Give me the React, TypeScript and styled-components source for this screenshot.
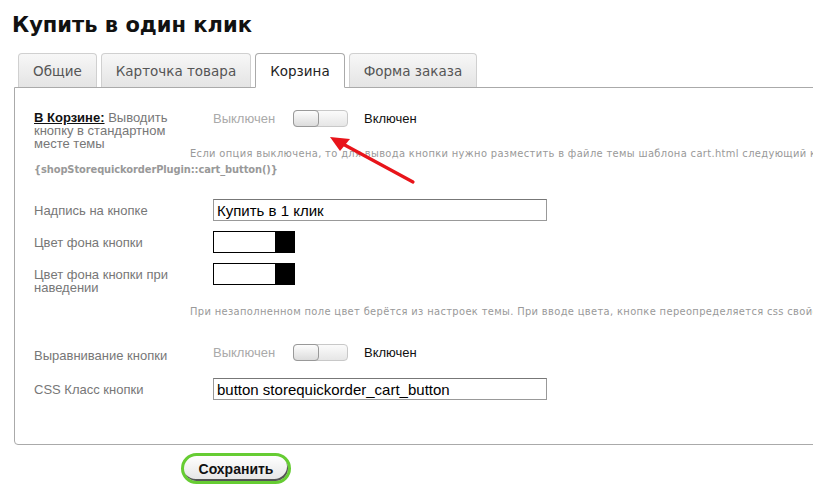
import styled, { createGlobalStyle } from "styled-components";

const Global = createGlobalStyle`
  html, body {
    margin: 0;
    padding: 0;
    background: #fff;
  }
  body {
    font-family: "Liberation Sans", Arial, sans-serif;
    overflow: hidden;
  }
`;

function Toggle() {
  return (
    <Switch>
      <Knob />
    </Switch>
  );
}

function App() {
  return (
    <Page>
      <Global />
      <Title>Купить в один клик</Title>
      <Tabs>
        <Tab>Общие</Tab>
        <Tab>Карточка товара</Tab>
        <Tab $active>Корзина</Tab>
        <Tab>Форма заказа</Tab>
      </Tabs>
      <Panel>
        <Field $top={22}>
          <Label $width={140} $flush>
            <Strong>В Корзине:</Strong> Выводить кнопку в стандартном месте темы
          </Label>
          <SwitchGroup>
            <Off>Выключен</Off>
            <Toggle />
            <On>Включен</On>
          </SwitchGroup>
        </Field>
        <Hint $top={-3}>
          Если опция выключена, то для вывода кнопки нужно разместить в файле темы шаблона cart.html следующий код
        </Hint>
        <Code>{"{shopStorequickorderPlugin::cart_button()}"}</Code>

        <Field $top={23}>
          <Label>Надпись на кнопке</Label>
          <Input defaultValue="Купить в 1 клик" />
        </Field>
        <Field $top={10}>
          <Label>Цвет фона кнопки</Label>
          <Swatch>
            <SwatchFill />
          </Swatch>
        </Field>
        <Field $top={10}>
          <Label $width={150}>Цвет фона кнопки при наведении</Label>
          <Swatch>
            <SwatchFill />
          </Swatch>
        </Field>
        <Hint $top={11}>
          При незаполненном поле цвет берётся из настроек темы. При вводе цвета, кнопке переопределяется css свойство
        </Hint>

        <Field $top={26}>
          <Label>Выравнивание кнопки</Label>
          <SwitchGroup>
            <Off>Выключен</Off>
            <Toggle />
            <On>Включен</On>
          </SwitchGroup>
        </Field>
        <Field $top={16}>
          <Label>CSS Класс кнопки</Label>
          <Input defaultValue="button storequickorder_cart_button" />
        </Field>

        <Arrow width="90" height="50" viewBox="0 0 90 50">
          <line x1="84" y1="46" x2="12" y2="7" stroke="#e8141a" strokeWidth="3.2" strokeLinecap="round" />
          <polygon points="1,1 21,3 11,15" fill="#e8141a" />
        </Arrow>
      </Panel>
      <Actions>
        <SaveButton>Сохранить</SaveButton>
      </Actions>
    </Page>
  );
}

const Page = styled.div`
  width: 813px;
  height: 502px;
  overflow: hidden;
  padding-top: 12px;
  box-sizing: border-box;
`;

const Title = styled.h1`
  margin: 0 0 0 12px;
  font-family: "DejaVu Sans", Verdana, sans-serif;
  font-size: 21px;
  font-weight: 700;
  color: #111;
  line-height: 26px;
`;

const Tabs = styled.div`
  display: flex;
  gap: 4px;
  margin: 15px 0 0 18px;
  position: relative;
  z-index: 1;
`;

const Tab = styled.div<{ $active?: boolean }>`
  box-sizing: border-box;
  padding: 0 14px;
  display: flex;
  align-items: center;
  font-family: "DejaVu Sans", Verdana, sans-serif;
  font-size: 13.5px;
  color: ${(p) => (p.$active ? "#222" : "#555")};
  border: 1px solid ${(p) => (p.$active ? "#aaa" : "#d0d0d0")};
  border-bottom: ${(p) => (p.$active ? "1px solid #fff" : "none")};
  border-radius: 4px 4px 0 0;
  background: ${(p) =>
    p.$active ? "#fff" : "linear-gradient(#f7f7f7, #e4e4e4)"};
  margin-bottom: ${(p) => (p.$active ? "-1px" : "0")};
  height: ${(p) => (p.$active ? "35px" : "34px")};
`;

const Panel = styled.div`
  position: relative;
  margin-left: 14px;
  width: 820px;
  height: 358px;
  box-sizing: border-box;
  border: 1px solid #aaa;
  border-radius: 0 0 0 4px;
  padding-left: 19px;
`;

const Field = styled.div<{ $top?: number }>`
  display: flex;
  align-items: flex-start;
  margin-top: ${(p) => p.$top ?? 0}px;
`;

const Label = styled.div<{ $width?: number; $flush?: boolean }>`
  flex-shrink: 0;
  font-size: 13px;
  line-height: 13px;
  color: #777;
  padding-top: ${(p) => (p.$flush ? "1px" : "5px")};
  width: ${(p) => (p.$width ? `${p.$width}px` : "179px")};
  margin-right: ${(p) => (p.$width ? `${179 - p.$width}px` : "0")};
`;

const Strong = styled.span`
  font-weight: 700;
  color: #111;
  text-decoration: underline;
`;

const SwitchGroup = styled.div`
  display: flex;
  align-items: center;
  height: 17px;
  font-size: 13px;
`;

const Off = styled.span`
  color: #aaa;
  width: 80px;
`;

const On = styled.span`
  color: #111;
  margin-left: 16px;
`;

const Switch = styled.div`
  width: 55px;
  height: 17px;
  box-sizing: border-box;
  border: 1px solid #c8c8c8;
  border-radius: 4px;
  background: linear-gradient(#fbfbfb, #e6e6e6);
  position: relative;
`;

const Knob = styled.div`
  position: absolute;
  left: -1px;
  top: -1px;
  width: 26px;
  height: 17px;
  box-sizing: border-box;
  border: 1px solid #999;
  border-radius: 4px;
  background: linear-gradient(#fdfdfd, #dcdcdc);
`;

const Hint = styled.div<{ $top?: number }>`
  margin: ${(p) => p.$top ?? 19}px 0 0 156px;
  font-family: "DejaVu Sans Condensed", "DejaVu Sans", sans-serif;
  font-size: 11px;
  letter-spacing: 0.35px;
  line-height: 13px;
  color: #999;
  white-space: nowrap;
`;

const Code = styled.div`
  margin-top: 3px;
  font-family: "DejaVu Sans Condensed", "DejaVu Sans", sans-serif;
  font-size: 11px;
  letter-spacing: -0.1px;
  font-weight: 700;
  line-height: 13px;
  color: #999;
  white-space: nowrap;
`;

const Input = styled.input`
  width: 334px;
  height: 22px;
  box-sizing: border-box;
  border: 1px solid #999;
  border-top-color: #777;
  padding: 0 3px;
  font-family: "Liberation Sans", Arial, sans-serif;
  font-size: 15px;
  color: #000;
  outline: none;
`;

const Swatch = styled.div`
  width: 82px;
  height: 22px;
  box-sizing: border-box;
  border: 1px solid #000;
  background: #fff;
  display: flex;
  justify-content: flex-end;
`;

const SwatchFill = styled.div`
  width: 19px;
  height: 100%;
  background: #000;
`;

const Arrow = styled.svg`
  position: absolute;
  left: 314px;
  top: 48px;
`;

const Actions = styled.div`
  padding: 8px 0 0 181px;
`;

const SaveButton = styled.button`
  width: 110px;
  height: 31px;
  box-sizing: border-box;
  border: 3px solid #66cc33;
  border-radius: 16px;
  background: linear-gradient(#ffffff, #e4e4e4);
  box-shadow: inset -1px -2px 0 #555;
  font-family: "Liberation Sans", Arial, sans-serif;
  font-size: 14px;
  font-weight: 700;
  color: #111;
  padding: 0;
  cursor: pointer;
`;

export default App;
